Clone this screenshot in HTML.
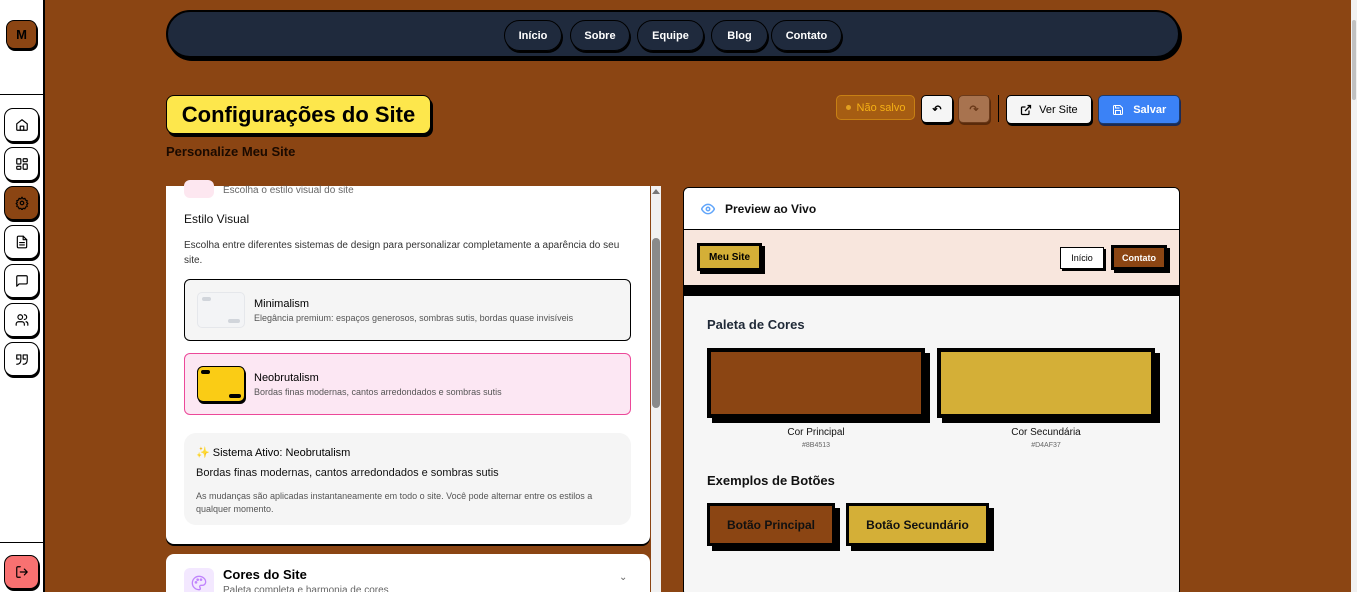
<!DOCTYPE html>
<html><head><meta charset="utf-8"><style>
*{box-sizing:border-box;margin:0;padding:0}
html,body{width:1357px;height:592px;overflow:hidden}
body{background:#8B4513;font-family:"Liberation Sans",sans-serif;position:relative}
.abs{position:absolute}
.side{left:0;top:0;width:45px;height:592px;background:#fff;border-right:2px solid #000}
.sb{position:absolute;left:4px;width:35px;height:34px;border:1.5px solid #000;border-radius:9px;background:#fff;box-shadow:1px 2px 0 #000;display:flex;align-items:center;justify-content:center}
.sb svg{width:14px;height:14px;fill:none;stroke:#000;stroke-width:2;stroke-linecap:round;stroke-linejoin:round}
.nav{left:166px;top:10px;width:1014px;height:48px;background:#1f2a3d;border:2px solid #000;border-radius:24px;box-shadow:2px 3px 0 #000}
.np{position:absolute;top:8px;height:31px;border:1.5px solid #000;border-radius:16px;color:#fff;font-weight:bold;font-size:11px;display:flex;align-items:center;justify-content:center;box-shadow:1px 2px 0 #000}
.card{background:#fff}
.btn{position:absolute;top:95px;height:28px;border-radius:5px;display:flex;align-items:center;justify-content:center;font-size:11px;font-weight:bold}
</style></head><body>
<div class="abs side">
 <div class="abs" style="left:6px;top:20px;width:31px;height:29px;background:#8B4513;border:1.5px solid #000;border-radius:8px;box-shadow:1px 2px 0 #000;color:#000;font-weight:bold;font-size:13px;display:flex;align-items:center;justify-content:center">M</div>
 <div class="abs" style="left:0;top:94px;width:44px;height:1px;background:#000"></div>
 <div class="sb" style="top:108px"><svg viewBox="0 0 24 24"><path d="M3 10l9-7 9 7v10a1 1 0 0 1-1 1H4a1 1 0 0 1-1-1z"/><path d="M9 21v-7h6v7"/></svg></div>
 <div class="sb" style="top:147px"><svg viewBox="0 0 24 24"><rect x="3" y="3" width="7" height="9" rx="1"/><rect x="14" y="3" width="7" height="5" rx="1"/><rect x="14" y="12" width="7" height="9" rx="1"/><rect x="3" y="16" width="7" height="5" rx="1"/></svg></div>
 <div class="sb" style="top:186px;background:#8B4513"><svg viewBox="0 0 24 24"><circle cx="12" cy="12" r="3"/><path d="M12 2l2 3 3-1 1 3 3 1-1 3 2 2-2 2 1 3-3 1-1 3-3-1-2 3-2-3-3 1-1-3-3-1 1-3-2-2 2-2-1-3 3-1 1-3 3 1z"/></svg></div>
 <div class="sb" style="top:225px"><svg viewBox="0 0 24 24"><path d="M14 2H6a2 2 0 0 0-2 2v16a2 2 0 0 0 2 2h12a2 2 0 0 0 2-2V8z"/><path d="M14 2v6h6M8 13h8M8 17h8"/></svg></div>
 <div class="sb" style="top:264px"><svg viewBox="0 0 24 24"><path d="M21 15a2 2 0 0 1-2 2H7l-4 4V5a2 2 0 0 1 2-2h14a2 2 0 0 1 2 2z"/></svg></div>
 <div class="sb" style="top:303px"><svg viewBox="0 0 24 24"><circle cx="9" cy="7" r="4"/><path d="M2 21v-2a4 4 0 0 1 4-4h6a4 4 0 0 1 4 4v2M16 3a4 4 0 0 1 0 8M22 21v-2a4 4 0 0 0-3-4"/></svg></div>
 <div class="sb" style="top:342px"><svg viewBox="0 0 24 24"><path d="M3 21c3 0 7-1 7-8V5H3v7h4M14 21c3 0 7-1 7-8V5h-7v7h4"/></svg></div>
 <div class="abs" style="left:0;top:542px;width:44px;height:1px;background:#000"></div>
 <div class="sb" style="top:555px;background:#f87171"><svg viewBox="0 0 24 24"><path d="M9 21H5a2 2 0 0 1-2-2V5a2 2 0 0 1 2-2h4M16 17l5-5-5-5M21 12H9"/></svg></div>
</div>
<div class="abs" style="right:0;top:0;width:6px;height:592px;background:#f1f1f1"><div class="abs" style="left:1px;top:20px;width:4px;height:80px;background:#c1c1c1;border-radius:2px"></div></div>
<div class="abs nav">
 <div class="np" style="left:336px;width:58px">Início</div>
 <div class="np" style="left:402px;width:60px">Sobre</div>
 <div class="np" style="left:469px;width:67px">Equipe</div>
 <div class="np" style="left:543px;width:57px">Blog</div>
 <div class="np" style="left:603px;width:71px">Contato</div>
</div>
<div class="abs" style="left:166px;top:95px;width:265px;height:39px;background:#FDE74C;border:1.5px solid #000;border-radius:8px;box-shadow:2px 3px 0 #000;font-weight:bold;font-size:22px;display:flex;align-items:center;justify-content:center">Configurações do Site</div>
<div class="abs" style="left:166px;top:144px;font-size:13px;font-weight:bold;color:#1a0a00">Personalize Meu Site</div>
<div class="btn" style="left:836px;width:79px;height:25px;background:#a65d12;border:1px solid #c78014;color:#f5b015;font-weight:normal"><span style="width:5px;height:5px;border-radius:50%;background:#e1a020;margin-right:6px"></span>Não salvo</div>
<div class="btn" style="left:921px;width:32px;background:#f5f5f5;border:1.5px solid #000;box-shadow:1px 2px 0 #000">↶</div>
<div class="btn" style="left:958px;width:32px;background:#a8734f;border:1.5px solid #6b3a1a;color:#6b3a1a;box-shadow:1px 2px 0 #5a2a0a">↷</div>
<div class="abs" style="left:998px;top:95px;width:1px;height:27px;background:#000"></div>
<div class="btn" style="left:1006px;width:86px;height:29px;background:#f5f5f5;border:1.5px solid #000;box-shadow:1px 2px 0 #000;font-weight:normal;justify-content:space-around;padding:0 10px"><svg width="12" height="12" viewBox="0 0 24 24" fill="none" stroke="#000" stroke-width="2.5"><path d="M18 13v6a2 2 0 0 1-2 2H5a2 2 0 0 1-2-2V8a2 2 0 0 1 2-2h6M15 3h6v6M10 14L21 3"/></svg><span>Ver Site</span></div>
<div class="btn" style="left:1098px;width:82px;height:29px;background:#3b82f6;border:1.5px solid #1d3a6b;box-shadow:1px 2px 0 #1a2a55;color:#fff;justify-content:space-around;padding:0 8px"><svg width="12" height="12" viewBox="0 0 24 24" fill="none" stroke="#fff" stroke-width="2"><path d="M19 21H5a2 2 0 0 1-2-2V5a2 2 0 0 1 2-2h11l5 5v11a2 2 0 0 1-2 2z"/><path d="M17 21v-8H7v8M7 3v5h8"/></svg><span>Salvar</span></div>

<div class="abs card" style="left:166px;top:186px;width:484px;height:358px;border-radius:0 0 8px 8px;box-shadow:0 2px 0 #000">
 <div class="abs" style="left:18px;top:-6px;width:30px;height:18px;background:#fde7f0;border-radius:6px"></div>
 <div class="abs" style="left:57px;top:-1px;font-size:10px;color:#666">Escolha o estilo visual do site</div>
 <div class="abs" style="left:18px;top:26px;font-size:12px;color:#111">Estilo Visual</div>
 <div class="abs" style="left:18px;top:52px;width:445px;font-size:10px;line-height:15px;color:#333">Escolha entre diferentes sistemas de design para personalizar completamente a aparência do seu site.</div>
 <div class="abs" style="left:18px;top:93px;width:447px;height:62px;border:1.5px solid #000;border-radius:6px;background:#f5f5f5">
  <div class="abs" style="left:12px;top:12px;width:48px;height:36px;border:1px solid #e5e7eb;border-radius:5px;background:#f3f4f6"><div class="abs" style="left:4px;top:4px;width:9px;height:4px;border-radius:2px;background:#d1d5db"></div><div class="abs" style="right:4px;bottom:4px;width:12px;height:4px;border-radius:2px;background:#d1d5db"></div></div>
  <div class="abs" style="left:69px;top:18px;font-size:11px;color:#000">Minimalism</div>
  <div class="abs" style="left:69px;top:33px;font-size:9px;color:#555">Elegância premium: espaços generosos, sombras sutis, bordas quase invisíveis</div>
 </div>
 <div class="abs" style="left:18px;top:167px;width:447px;height:62px;border:1.5px solid #ec4899;border-radius:6px;background:#fce7f3">
  <div class="abs" style="left:12px;top:12px;width:48px;height:36px;border:1.5px solid #000;border-radius:6px;background:#facc15;box-shadow:1px 2px 0 #000"><div class="abs" style="left:3px;top:3px;width:9px;height:4px;border-radius:2px;background:#000"></div><div class="abs" style="right:3px;bottom:3px;width:12px;height:4px;border-radius:2px;background:#000"></div></div>
  <div class="abs" style="left:69px;top:18px;font-size:11px;color:#000">Neobrutalism</div>
  <div class="abs" style="left:69px;top:33px;font-size:9px;color:#555">Bordas finas modernas, cantos arredondados e sombras sutis</div>
 </div>
 <div class="abs" style="left:18px;top:247px;width:447px;height:92px;border-radius:12px;background:#f5f5f5">
  <div class="abs" style="left:12px;top:13px;font-size:11px;color:#000"><span style="color:#f59e0b">✨</span> Sistema Ativo: Neobrutalism</div>
  <div class="abs" style="left:12px;top:34px;font-size:11px;color:#111">Bordas finas modernas, cantos arredondados e sombras sutis</div>
  <div class="abs" style="left:12px;top:57px;width:420px;font-size:9px;line-height:13px;color:#555">As mudanças são aplicadas instantaneamente em todo o site. Você pode alternar entre os estilos a qualquer momento.</div>
 </div>
</div>
<div class="abs" style="left:651px;top:186px;width:10px;height:406px;background:#f1f1f1"><div class="abs" style="left:1px;top:52px;width:8px;height:170px;border-radius:4px;background:#8a8a8a"></div><div class="abs" style="left:1px;top:3px;width:0;height:0;border:4px solid transparent;border-bottom:5px solid #777;border-top:0"></div></div>
<div class="abs card" style="left:166px;top:554px;width:484px;height:40px;border-radius:8px 8px 0 0">
 <div class="abs" style="left:18px;top:14px;width:30px;height:30px;background:#f3e8ff;border-radius:6px"><svg class="abs" style="left:7px;top:7px" width="16" height="16" viewBox="0 0 24 24" fill="none" stroke="#c084fc" stroke-width="2"><path d="M12 2a10 10 0 0 0 0 20c1.5 0 2-1 2-2s-1-1.5-1-2.5 1-2 2-2h2a5 5 0 0 0 5-5C22 6 17.5 2 12 2z"/><circle cx="7.5" cy="11" r="1"/><circle cx="10" cy="7" r="1"/><circle cx="15" cy="7" r="1"/></svg></div>
 <div class="abs" style="left:57px;top:13px;font-size:13px;font-weight:bold;color:#000">Cores do Site</div>
 <div class="abs" style="left:57px;top:31px;font-size:10px;color:#666">Paleta completa e harmonia de cores</div>
 <div class="abs" style="left:453px;top:18px;font-size:10px;color:#666">⌄</div>
</div>

<div class="abs" style="left:683px;top:187px;width:497px;height:410px;background:#f6f6f6;border:1.5px solid #000;border-radius:6px;overflow:hidden">
 <div class="abs" style="left:0;top:0;width:497px;height:42px;background:#fff;border-bottom:1.5px solid #000">
  <svg class="abs" style="left:17px;top:15px" width="14" height="12" viewBox="0 0 24 20" fill="none" stroke="#60a5fa" stroke-width="2.5"><path d="M1 10s4-8 11-8 11 8 11 8-4 8-11 8S1 10 1 10z"/><circle cx="12" cy="10" r="3"/></svg>
  <div class="abs" style="left:41px;top:14px;font-size:12px;font-weight:bold;color:#111">Preview ao Vivo</div>
 </div>
 <div class="abs" style="left:0;top:42px;width:497px;height:55px;background:#f8e6dd">
  <div class="abs" style="left:13px;top:13px;width:65px;height:28px;background:#D4AF37;border:3px solid #000;box-shadow:3px 3px 0 #000;font-size:10px;font-weight:bold;display:flex;align-items:center;justify-content:center">Meu Site</div>
  <div class="abs" style="left:376px;top:17px;width:44px;height:22px;background:#fff;border:1.5px solid #000;box-shadow:2px 2px 0 #000;font-size:9px;display:flex;align-items:center;justify-content:center">Início</div>
  <div class="abs" style="left:427px;top:15px;width:56px;height:25px;background:#8B4513;border:3px solid #000;box-shadow:3px 3px 0 #000;color:#fff;font-size:9px;font-weight:bold;display:flex;align-items:center;justify-content:center">Contato</div>
 </div>
 <div class="abs" style="left:0;top:97px;width:497px;height:11px;background:#000"></div>
 <div class="abs" style="left:23px;top:129px;font-size:13px;font-weight:bold;color:#1f2937">Paleta de Cores</div>
 <div class="abs" style="left:23px;top:160px;width:218px;height:70px;background:#8B4513;border:4px solid #000;box-shadow:5px 5px 0 #000"></div>
 <div class="abs" style="left:253px;top:160px;width:218px;height:70px;background:#D4AF37;border:4px solid #000;box-shadow:5px 5px 0 #000"></div>
 <div class="abs" style="left:23px;top:239px;width:218px;text-align:center;font-size:10px;color:#111">Cor Principal</div>
 <div class="abs" style="left:23px;top:254px;width:218px;text-align:center;font-size:7px;color:#666">#8B4513</div>
 <div class="abs" style="left:253px;top:239px;width:218px;text-align:center;font-size:10px;color:#111">Cor Secundária</div>
 <div class="abs" style="left:253px;top:254px;width:218px;text-align:center;font-size:7px;color:#666">#D4AF37</div>
 <div class="abs" style="left:23px;top:285px;font-size:13px;font-weight:bold;color:#111">Exemplos de Botões</div>
 <div class="abs" style="left:23px;top:315px;width:128px;height:43px;background:#8B4513;border:3px solid #000;box-shadow:5px 5px 0 #000;font-size:12px;font-weight:bold;color:#111;display:flex;align-items:center;justify-content:center">Botão Principal</div>
 <div class="abs" style="left:162px;top:315px;width:143px;height:43px;background:#D4AF37;border:3px solid #000;box-shadow:5px 5px 0 #000;font-size:12px;font-weight:bold;color:#111;display:flex;align-items:center;justify-content:center">Botão Secundário</div>
</div>
</body></html>
